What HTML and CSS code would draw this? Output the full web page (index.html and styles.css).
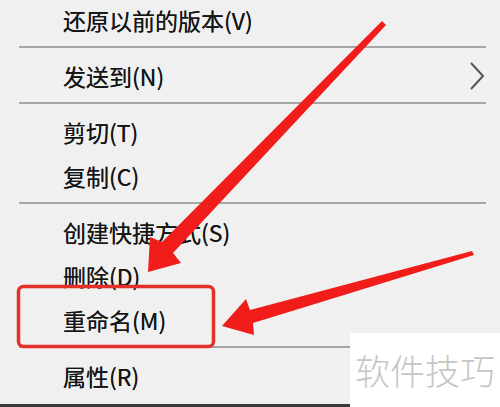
FILE: index.html
```html
<!DOCTYPE html>
<html lang="zh">
<head>
    <meta charset="UTF-8">
    <meta name="viewport" content="width=device-width, initial-scale=1.0">
    <title>右键菜单</title>
    <link rel="stylesheet" href="styles.css">
</head>
<body>
    <div class="menu">
        <div class="item first">还原以前的版本(V)</div>
        <div class="sep"></div>
        <div class="item">
            <span>发送到(N)</span>
            <svg class="chevron" width="16" height="30" viewBox="0 0 16 30">
                <polyline points="2,2 14,15 2,28" fill="none" stroke="#555" stroke-width="2"/>
            </svg>
        </div>
        <div class="sep"></div>
        <div class="item">剪切(T)</div>
        <div class="item">复制(C)</div>
        <div class="sep"></div>
        <div class="item">创建快捷方式(S)</div>
        <div class="item">删除(D)</div>
        <div class="item">重命名(M)</div>
        <div class="sep"></div>
        <div class="item">属性(R)</div>
    </div>
    <div class="taskbar"></div>

    <!-- 标注：红框和箭头 -->
    <svg class="marks" width="500" height="407" viewBox="0 0 500 407">
        <rect x="18.5" y="286.5" width="195" height="60" rx="5" fill="none" stroke="#e3312a" stroke-width="3.5"/>
        <polygon fill="#f11d1a" points="382,21 386,25 173,253 181,263 148,272 150,237 162,242"/>
        <polygon fill="#f11d1a" points="472,251 474,255 253,323 254,335 222,326 246,299 250,310"/>
    </svg>

    <div class="watermark">软件技巧</div>
</body>
</html>
```

FILE: styles.css
```css
html, body {
    margin: 0;
    padding: 0;
}

body {
    width: 500px;
    height: 407px;
    background: #f0f0f0;
    font-family: "Noto Sans CJK SC", "Noto Sans", sans-serif;
    color: #151515;
    position: relative;
    overflow: hidden;
}

.menu {
    height: 404px;
    overflow: hidden;
}

.item {
    height: 44px;
    line-height: 44px;
    font-size: 23px;
    padding-left: 63px;
    padding-right: 15px;
    display: flex;
    align-items: center;
    justify-content: space-between;
    text-shadow: 0 0 0.6px #333;
}

.item.first {
    margin-top: -2px;
}

.chevron {
    display: block;
}

.sep {
    height: 2px;
    background: #a6a6a6;
    margin: 4px 14px 6px 19px;
}

.taskbar {
    height: 3px;
    background: #3a3a3a;
}

.marks {
    position: absolute;
    top: 0;
    left: 0;
    pointer-events: none;
}

.watermark {
    position: absolute;
    right: 0;
    bottom: 0;
    width: 145px;
    height: 74px;
    padding-left: 5px;
    background: #fff;
    color: #c6c6c6;
    font-size: 35px;
    line-height: 74px;
    font-weight: 300;
}
```
